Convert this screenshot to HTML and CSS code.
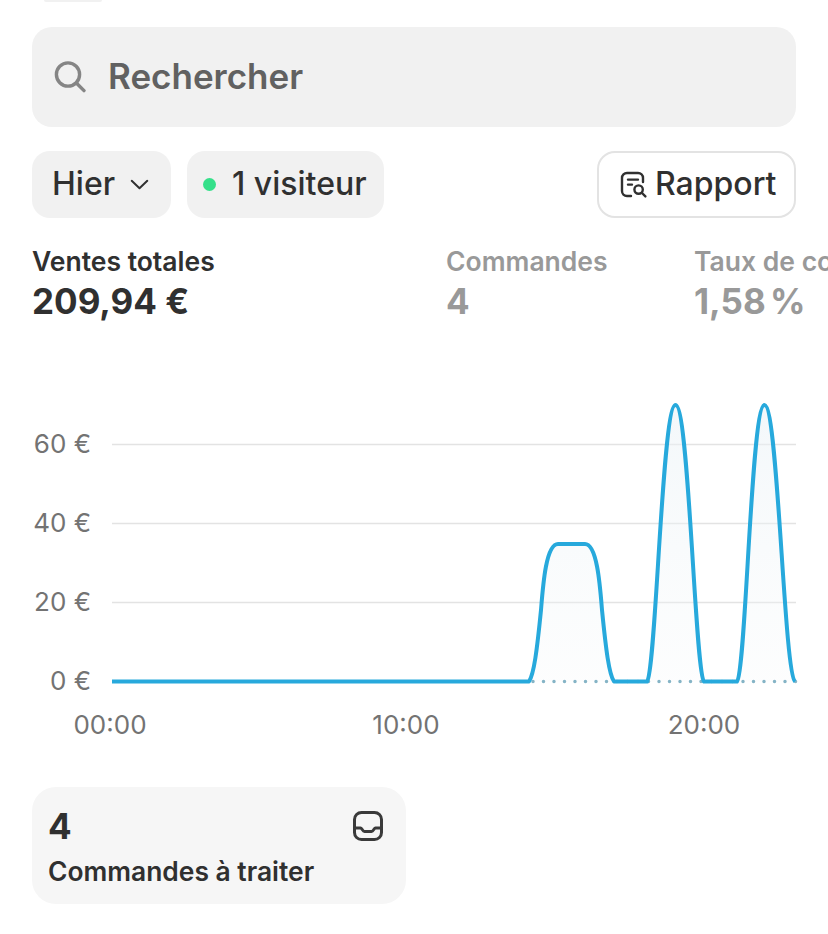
FILE: index.html
```html
<!DOCTYPE html>
<html lang="fr">
<head>
<meta charset="utf-8">
<title>Accueil</title>
<link rel="stylesheet" href="styles.css">
</head>
<body>
<main class="page">
  <div class="top-sliver"></div>
  <div class="search">
    <svg class="search-icon" viewBox="0 0 32 32" fill="none" stroke="#858585" stroke-width="3.4" stroke-linecap="round"><circle cx="14" cy="13.5" r="11.6"/><path d="M22.6 22.2 30 29.6"/></svg>
    <span class="search-text">Rechercher</span>
  </div>
  <div class="toolbar">
    <div class="chip chip-period"><span class="chip-text">Hier</span>
      <svg class="chevron" viewBox="0 0 20 12" fill="none" stroke="#303030" stroke-width="2.2" stroke-linecap="round" stroke-linejoin="round"><path d="M1.5 2 10 10 18.5 2"/></svg>
    </div>
    <div class="chip chip-visitors"><i class="dot"></i><span class="chip-text">1 visiteur</span></div>
    <div class="chip chip-report">
      <svg class="report-icon" viewBox="0 0 28 28" fill="none" stroke="#303030" stroke-width="2.4" stroke-linecap="round" stroke-linejoin="round"><path d="M11 25H7a5 5 0 0 1-5-5V7a5 5 0 0 1 5-5h11a5 5 0 0 1 5 5v4"/><path d="M8 8.600h10M8 13.600h4"/><circle cx="18.600" cy="18.600" r="4.200"/><path d="m22 22 3.400 3.400"/></svg>
      <span class="chip-text">Rapport</span>
    </div>
  </div>
  <div class="stats">
    <div class="stat stat-active"><div class="stat-label">Ventes totales</div><div class="stat-value">209,94 €</div></div>
    <div class="stat stat-orders"><div class="stat-label">Commandes</div><div class="stat-value">4</div></div>
    <div class="stat stat-rate"><div class="stat-label">Taux de conversion</div><div class="stat-value">1,58 %</div></div>
  </div>
  <svg class="chart" viewBox="32 390 796 360" width="796" height="360">
    <defs>
      <linearGradient id="area" x1="0" y1="0" x2="0" y2="1">
        <stop offset="0" stop-color="#eaf2f6" stop-opacity=".55"/>
        <stop offset="1" stop-color="#f3f6f8" stop-opacity=".2"/>
      </linearGradient>
    </defs>
    <g class="grid">
      <path d="M112 444.500H796M112 523.500H796M112 602.500H796"/>
    </g>
    <g class="axis-y">
      <text x="91" y="453">60 €</text>
      <text x="91" y="532">40 €</text>
      <text x="91" y="611">20 €</text>
      <text x="91" y="690">0 €</text>
    </g>
    <g class="axis-x">
      <text x="110" y="734">00:00</text>
      <text x="406" y="734">10:00</text>
      <text x="704" y="734">20:00</text>
    </g>
    <path class="area" d="M529 681.500C534 674 537 650 541 610C543 585 546 544 558 544H585C597 544 600 585 602 610C606 650 609 674 614 681.500H647C656 672 662 405 675.500 405C689 405 695 672 704 681.500H737C746 672 751 405 764.500 405C778 405 784 672 795 681.500Z"/>
    <path class="dots" d="M533 681.500H796"/>
    <path class="line" d="M112 681.500H529C534 674 537 650 541 610C543 585 546 544 558 544H585C597 544 600 585 602 610C606 650 609 674 614 681.500H647C656 672 662 405 675.500 405C689 405 695 672 704 681.500H737C746 672 751 405 764.500 405C778 405 784 672 795 681.500"/>
  </svg>
  <div class="card">
    <div class="card-body">
      <div class="card-value">4</div>
      <div class="card-label">Commandes à traiter</div>
    </div>
    <svg class="inbox-icon" viewBox="0 0 30 30" fill="none" stroke="#3a3a3a" stroke-width="3" stroke-linecap="round" stroke-linejoin="round"><rect x="1.500" y="1.500" width="27" height="27" rx="7"/><path d="M2 17h5.500c1.500 0 2 3.500 4 3.500h7c2 0 2.500-3.500 4-3.500H28"/></svg>
  </div>
</main>
</body>
</html>
```

FILE: styles.css
```css
* { box-sizing: border-box; }
html, body { margin: 0; background: #fff; }
body {
  width: 828px;
  height: 934px;
  overflow: hidden;
  font-family: Inter, "Liberation Sans", sans-serif;
  color: #303030;
}
.page { padding: 0 32px; }
.top-sliver {
  width: 58px;
  height: 2px;
  margin-left: 12px;
  background: #f1f1f1;
  border-radius: 0 0 8px 8px;
}
.search {
  display: flex;
  align-items: center;
  gap: 22px;
  height: 100px;
  margin-top: 25px;
  padding-left: 22px;
  background: #f1f1f1;
  border-radius: 20px;
  font-size: 35px;
  font-weight: 600;
  color: #616161;
}
.search-text { position: relative; top: -1px; }
.search-icon { flex: none; width: 32px; height: 32px; }
.toolbar {
  display: flex;
  gap: 16px;
  margin-top: 24px;
}
.chip {
  display: flex;
  align-items: center;
  height: 67px;
  background: #f1f1f1;
  border-radius: 18px;
  font-size: 32px;
  font-weight: 550;
  white-space: nowrap;
}
.chip-text { position: relative; top: -1px; }
.chip-period { width: 139px; padding: 0 20px; }
.chevron { flex: none; width: 19px; height: 11px; margin-left: 15px; }
.chip-visitors { width: 197px; padding-left: 16px; }
.dot {
  flex: none;
  width: 13px;
  height: 13px;
  margin-right: 16px;
  border-radius: 50%;
  background: #35e08a;
}
.chip-report {
  width: 199px;
  margin-left: auto;
  padding-left: 21px;
  gap: 7px;
  background: #fff;
  border: 2px solid #e3e3e3;
}
.report-icon { flex: none; width: 28px; height: 28px; }
.stats {
  display: flex;
  margin-top: 27px;
  white-space: nowrap;
}
.stat { flex: none; }
.stat-label { font-size: 26.500px; font-weight: 600; line-height: 32px; }
.stat-value { margin-top: 1px; font-size: 35px; font-weight: 700; line-height: 46px; }
.stat-active { width: 414px; }
.stat-orders { width: 248px; color: #999; }
.stat-rate { color: #999; }
.stat-rate .stat-value { word-spacing: -4px; }
.chart {
  display: block;
  margin-top: 66px;
  overflow: visible;
}
.grid path { stroke: #e3e3e3; stroke-width: 1.6; fill: none; }
.axis-y text, .axis-x text {
  font-family: Inter, "Liberation Sans", sans-serif;
  font-size: 26px;
  fill: #737373;
}
.axis-y text { text-anchor: end; }
.axis-x text { text-anchor: middle; }
.area { fill: url(#area); stroke: none; }
.dots {
  fill: none;
  stroke: #85b4c6;
  stroke-width: 3.500;
  stroke-linecap: round;
  stroke-dasharray: 0 10.500;
}
.line {
  fill: none;
  stroke: #27a9dc;
  stroke-width: 4;
  stroke-linejoin: round;
}
.card {
  display: flex;
  justify-content: space-between;
  width: 374px;
  height: 117px;
  margin-top: 37px;
  padding: 16px 23px 0 16px;
  background: #f6f6f6;
  border-radius: 24px;
}
.card-value { font-size: 35px; font-weight: 700; line-height: 46px; }
.card-label { margin-top: 5px; font-size: 26.400px; font-weight: 600; line-height: 34px; white-space: nowrap; }
.inbox-icon { flex: none; width: 30px; height: 30px; margin-top: 8px; }
```
